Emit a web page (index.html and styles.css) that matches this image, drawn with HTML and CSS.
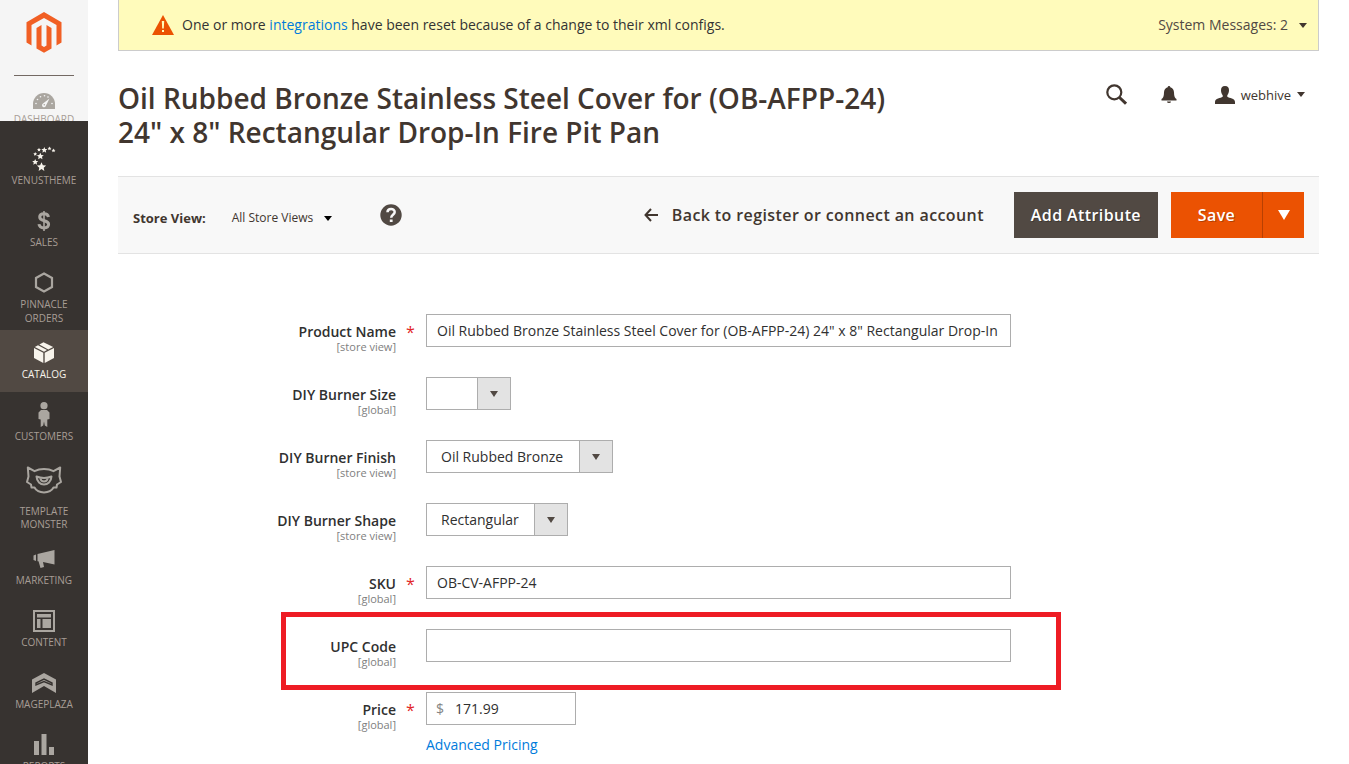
FILE: index.html
```html
<!DOCTYPE html>
<html lang="en">
<head>
<meta charset="utf-8">
<meta name="viewport" content="width=device-width, initial-scale=1">
<title>Oil Rubbed Bronze Stainless Steel Cover / Products / Catalog</title>
<link rel="stylesheet" href="styles.css">
</head>
<body>
<div class="layout">
  <aside class="sidebar">
    <div class="sidebar-top">
      <a class="logo" href="#" aria-label="Magento Admin">
        <svg width="36" height="42" viewBox="0 0 36 42"><path fill="#f15f24" d="M18 0 35.500 10.200V30.500L30.500 33.400V13.100L18 5.900 5.500 13.100V33.400L.5 30.500V10.200Z"/><path fill="#f15f24" d="M10.500 16 15.500 13.100V33.500L18 35 20.500 33.500V13.100L25.500 16V36.400L18 40.800 10.500 36.400Z"/></svg>
      </a>
      <a class="nav-item nav-cut" href="#">
        <span class="nav-icon"><svg width="22" height="17" viewBox="0 0 22 17"><path fill="#aaa6a0" d="M0 16V11a11 11 0 0 1 22 0v5Z"/><g fill="#f5f5f5"><circle cx="3" cy="10.500" r=".8"/><circle cx="4.500" cy="6.500" r=".8"/><circle cx="7.500" cy="3.800" r=".8"/><circle cx="11.500" cy="2.800" r=".8"/><circle cx="15" cy="4" r=".8"/><circle cx="19" cy="10.500" r=".8"/><path d="M16.500 5.500 13 12.500a2 2 0 1 1-3-2Z"/></g><circle cx="11.300" cy="11.800" r=".8" fill="#aaa6a0"/></svg></span>
        <span>Dashboard</span>
      </a>
    </div>
    <nav class="nav" aria-label="Main menu">
      <a class="nav-item" href="#">
        <span class="nav-icon"><svg width="24" height="26" viewBox="0 0 24 26"><defs><path id="star" d="M0-1 .3-.35 1-.3.48.18.62.9 0 .5-.62.9-.48.180-1-.3-.3-.35Z"/></defs><g fill="#f7f3eb"><use href="#star" transform="translate(21.500 4.500) scale(2)"/><use href="#star" transform="translate(17.500 2.500) scale(2)"/><use href="#star" transform="translate(12.300 4) scale(3)"/><use href="#star" transform="translate(7 3.700) scale(2)"/><use href="#star" transform="translate(8.300 10.200) scale(3.500)"/><use href="#star" transform="translate(3.200 8) scale(2)"/><use href="#star" transform="translate(3.200 16) scale(3)"/><use href="#star" transform="translate(9.500 20.800) scale(4.600)"/></g></svg></span>
        <span>Venustheme</span>
      </a>
      <a class="nav-item" href="#">
        <span class="nav-icon"><svg width="14" height="22" viewBox="0 0 14 22"><path fill="none" stroke="#aaa6a0" stroke-width="3" d="M11.500 7C11 4.700 9.500 3.800 7 3.800 4.300 3.800 2.700 5 2.700 7c0 5.200 8.900 2.300 8.900 7.300 0 2.300-1.800 3.600-4.600 3.600-3 0-4.700-1.300-5-3.800"/><path stroke="#aaa6a0" stroke-width="1.600" d="M7 1v20"/></svg></span>
        <span>Sales</span>
      </a>
      <a class="nav-item nav-tight" href="#">
        <span class="nav-icon"><svg width="20" height="21" viewBox="0 0 20 21"><path fill="none" stroke="#aaa6a0" stroke-width="2.200" d="M10 1.500 18 6V15L10 19.500 2 15V6Z"/></svg></span>
        <span>Pinnacle<br>Orders</span>
      </a>
      <a class="nav-item nav-active" href="#" aria-current="page">
        <span class="nav-icon"><svg width="20" height="21" viewBox="0 0 20 21"><g fill="#f7f3eb"><path d="M0 6 9.300 10.800V21L0 16Z"/><path d="M20 6 10.700 10.800V21L20 16Z"/><path d="M.8 4.900 4 3.200 13 8 10 9.700Z"/><path d="M5.300 2.500 9.500.3 19.200 4.900 14.300 7.400Z"/></g></svg></span>
        <span>Catalog</span>
      </a>
      <a class="nav-item" href="#">
        <span class="nav-icon"><svg width="12" height="25" viewBox="0 0 12 25"><g fill="#aaa6a0"><circle cx="6" cy="3.700" r="3.600"/><path d="M3 8h6l2.500 2.500V17L9.300 17.500V25L6.800 23.500 6 19.500 5.200 23.500 2.700 25V17.500L.5 17V10.500Z"/></g></svg></span>
        <span>Customers</span>
      </a>
      <a class="nav-item nav-tall" href="#">
        <span class="nav-icon"><svg width="36" height="28" viewBox="0 0 36 28"><g fill="none" stroke="#aaa6a0" stroke-width="2" stroke-linejoin="round"><path d="M1.800 1.500 8.500 5.200C14 2.300 22 2.300 27.500 5.200L34.200 1.500 33.500 10.500 35 16 31 18.500 30.500 21.500H27.500C24 28 12 28 8.500 21.500H5.500L5 18.500 1 16 2.500 10.500Z"/><path d="M10.500 10.500Q18 13.500 25.500 10.500C25 21 11 21 10.500 10.500Z"/><path d="M14.500 12.500a3.500 3 0 0 0 7 0"/></g></svg></span>
        <span>Template<br>Monster</span>
      </a>
      <a class="nav-item" href="#">
        <span class="nav-icon"><svg width="24" height="20" viewBox="0 0 24 20"><g fill="#aaa6a0"><path d="M1.500 6.500 4 5.500V12L1.500 11Z"/><path d="M5.500 5 22.500 1V15.500L11 13 12 18 8.500 19 6.500 12.300H5.500Z"/></g></svg></span>
        <span>Marketing</span>
      </a>
      <a class="nav-item" href="#">
        <span class="nav-icon"><svg width="22" height="22" viewBox="0 0 22 22"><path fill="none" stroke="#aaa6a0" stroke-width="2" d="M1 1h20v20H1z"/><path fill="#aaa6a0" d="M4 4h14v3.500H4zM4 9h3.500v9H4zM9.500 9H18v9H9.500z"/></svg></span>
        <span>Content</span>
      </a>
      <a class="nav-item" href="#">
        <span class="nav-icon"><svg width="24" height="20" viewBox="0 0 24 20"><path fill="#aaa6a0" d="M12 0 24 6.500V20L12 13 0 20V6.500Z"/><path fill="none" stroke="#373330" stroke-width="1.400" d="M4 12V10L12 6 20 10V12L12 8.500 4 12Z"/></svg></span>
        <span>Mageplaza</span>
      </a>
      <a class="nav-item" href="#">
        <span class="nav-icon"><svg width="20" height="21" viewBox="0 0 20 21"><path fill="#aaa6a0" d="M0 7h5v14H0zM7.500 0h5v21h-5zM15 13h5v8h-5z"/></svg></span>
        <span>Reports</span>
      </a>
    </nav>
  </aside>

  <main class="page">
    <section class="notice">
      <svg width="22" height="20" viewBox="0 0 22 20"><path fill="#eb5202" d="M11 0 22 20H0Z"/><path fill="#fffbbb" d="M9.800 6h2.400l-.4 7.500h-1.600zM10 15h2v2h-2z"/></svg>
      <p class="notice-text">One or more <a href="#">integrations</a> have been reset because of a change to their xml configs.</p>
      <button class="notice-toggle" type="button">System Messages: 2 <i class="caret"></i></button>
    </section>

    <header class="page-header">
      <h1>Oil Rubbed Bronze Stainless Steel Cover for (OB-AFPP-24) 24" x 8" Rectangular Drop-In Fire Pit Pan</h1>
      <div class="header-tools">
        <button class="tool" type="button" aria-label="Search"><svg width="21" height="21" viewBox="0 0 21 21"><g fill="none" stroke="#41362f"><circle cx="8.300" cy="8.300" r="7" stroke-width="2.200"/><path stroke-width="3" d="m13.500 13.500 6.500 6.200"/></g></svg></button>
        <button class="tool" type="button" aria-label="Notifications"><svg width="16" height="17" viewBox="0 0 16 17"><path fill="#41362f" d="M8 0a1.300 1.300 0 0 1 1.300 1.300C11.800 2 13 4 13 6.500c0 4 1 5.500 2.500 6.500v1.500H.5V13C2 12 3 10.500 3 6.500 3 4 4.200 2 6.700 1.300A1.300 1.300 0 0 1 8 0ZM6 15.500h4A2 1.500 0 0 1 6 15.500Z"/></svg></button>
        <button class="user" type="button"><svg width="20" height="18" viewBox="0 0 20 18"><path fill="#41362f" d="M10 0c3 0 4 1.800 4 4.300 0 2.200-.7 3.700-1.700 4.900v1.500c2 1.500 7.700 1.300 7.700 5.300v2H0v-2c0-4 5.700-3.800 7.700-5.300V9.200C6.700 8 6 6.500 6 4.300 6 1.800 7 0 10 0Z"/></svg><span>webhive</span><i class="caret"></i></button>
      </div>
    </header>

    <section class="actions">
      <div class="store">
        <span class="store-label">Store View:</span>
        <button class="store-switch" type="button">All Store Views <i class="caret caret-black"></i></button>
      </div>
      <a class="help" href="#" aria-label="Help"><svg width="22" height="22" viewBox="0 0 22 22"><circle cx="11" cy="11" r="10.700" fill="#514943"/><path fill="none" stroke="#f8f8f8" stroke-width="2.500" d="M7.500 8.300C7.500 4 14.700 4 14.700 8c0 2.800-3.500 2.800-3.500 5.700"/><path fill="#f8f8f8" d="M9.800 15.500h2.800V18H9.800z"/></svg></a>
      <div class="action-buttons">
        <button class="back" type="button"><svg width="14" height="14" viewBox="0 0 14 14"><path fill="none" stroke="#41362f" stroke-width="2" d="M7 1 1.500 7 7 13M1.500 7H14"/></svg>Back to register or connect an account</button>
        <button class="btn btn-dark" type="button">Add Attribute</button>
        <div class="split">
          <button class="btn btn-save" type="button">Save</button>
          <button class="btn btn-more" type="button" aria-label="More save options"><svg width="12" height="10" viewBox="0 0 12 10"><path fill="#fff" d="M0 0h12L6 10Z"/></svg></button>
        </div>
      </div>
    </section>

    <form class="form">
      <div class="field">
        <label class="field-label" for="name">Product Name<small>[store view]</small></label>
        <span class="required">*</span>
        <div class="control"><input class="text-input" id="name" type="text" value='Oil Rubbed Bronze Stainless Steel Cover for (OB-AFPP-24) 24" x 8" Rectangular Drop-In'></div>
      </div>
      <div class="field">
        <label class="field-label" for="size">DIY Burner Size<small>[global]</small></label>
        <div class="control"><span class="select-wrap"><select id="size"><option></option></select><i class="select-arrow"></i></span></div>
      </div>
      <div class="field">
        <label class="field-label" for="finish">DIY Burner Finish<small>[store view]</small></label>
        <div class="control"><span class="select-wrap"><select id="finish"><option>Oil Rubbed Bronze</option></select><i class="select-arrow"></i></span></div>
      </div>
      <div class="field">
        <label class="field-label" for="shape">DIY Burner Shape<small>[store view]</small></label>
        <div class="control"><span class="select-wrap"><select id="shape"><option>Rectangular</option></select><i class="select-arrow"></i></span></div>
      </div>
      <div class="field">
        <label class="field-label" for="sku">SKU<small>[global]</small></label>
        <span class="required">*</span>
        <div class="control"><input class="text-input" id="sku" type="text" value="OB-CV-AFPP-24"></div>
      </div>
      <div class="field field-marked">
        <label class="field-label" for="upc">UPC Code<small>[global]</small></label>
        <div class="control"><input class="text-input" id="upc" type="text"></div>
      </div>
      <div class="field">
        <label class="field-label" for="price">Price<small>[global]</small></label>
        <span class="required">*</span>
        <div class="control">
          <div class="price-box"><span class="currency">$</span><input id="price" type="text" value="171.99"></div>
          <a class="advanced" href="#">Advanced Pricing</a>
        </div>
      </div>
    </form>
  </main>
</div>
</body>
</html>
```

FILE: styles.css
```css
* { box-sizing: border-box; }

html { overflow: hidden; }

body {
  margin: 0;
  height: 100vh;
  overflow: hidden;
  background: #fff;
  color: #333;
  font: 14px/20px "Open Sans", "Noto Sans", sans-serif;
}

a { color: #007bdb; text-decoration: none; }

button, input, select { font: inherit; color: inherit; border-radius: 0; }

button {
  padding: 0;
  border: 0;
  background: none;
  cursor: pointer;
}

svg { display: block; flex: none; }

.layout { display: flex; min-height: 100%; }

/* Sidebar */
.sidebar {
  flex: none;
  width: 88px;
  background: #373330;
}

.sidebar-top { background: #f5f5f5; }

.logo {
  display: flex;
  justify-content: center;
  margin: 0 14px;
  padding: 12px 0 21px;
  border-bottom: 1px solid #736963;
}

.nav { padding-top: 15px; }

.nav-item {
  display: flex;
  flex-direction: column;
  align-items: center;
  min-height: 62px;
  padding-top: 8px;
  color: #a79d95;
  font-size: 10px;
  line-height: 14px;
  text-align: center;
  text-transform: uppercase;
}

.nav-icon {
  display: flex;
  flex: none;
  align-items: center;
  justify-content: center;
  height: 29px;
}

.nav-cut {
  height: 45px;
  min-height: 0;
  padding-top: 7px;
  overflow: hidden;
}

.nav-cut .nav-icon { padding-top: 8px; }

.nav-tight { height: 70px; }
.nav-active { background: #514943; color: #f7f3eb; }
.nav-tall { height: 82px; line-height: 13px; }
.nav-tall .nav-icon { height: 43px; padding-bottom: 8px; }

/* System notice */
.page { flex: 1; min-width: 0; padding: 0 30px; }

.notice {
  display: flex;
  align-items: center;
  height: 51px;
  padding: 0 11px 0 33px;
  border: 1px solid #ccc;
  border-top: 0;
  background: #fffbbb;
}

.notice-text { flex: 1; margin: 0 8px; }

.notice-toggle {
  display: flex;
  align-items: center;
  gap: 11px;
  color: #514943;
}

.caret {
  border: 4px solid transparent;
  border-top: 5px solid #41362f;
  border-bottom: 0;
}

.caret-black { border-top-color: #000; }

/* Title */
.page-header {
  display: flex;
  justify-content: space-between;
  gap: 30px;
  padding: 30px 14px 27px 0;
}

h1 {
  max-width: 790px;
  margin: 0;
  color: #41362f;
  font-size: 28px;
  font-weight: 600;
  line-height: 34px;
}

.header-tools {
  display: flex;
  align-items: center;
  height: 27px;
}

.tool { margin-right: 34px; }
.tool + .tool { margin-right: 38px; }

.user {
  display: flex;
  align-items: center;
  gap: 6px;
  color: #41362f;
  font-size: 13px;
}

/* Page actions */
.actions {
  display: flex;
  align-items: center;
  height: 78px;
  padding: 0 15px;
  border: solid #e3e3e3;
  border-width: 1px 0;
  background: #f8f8f8;
}

.store { display: flex; align-items: center; padding-top: 6px; }

.store-label { color: #41362f; font-weight: 700; font-size: 13px; }

.store-switch {
  display: flex;
  align-items: center;
  gap: 11px;
  margin: 0 48px 0 26px;
  color: #41362f;
  font-size: 12px;
}

.action-buttons { display: flex; margin-left: auto; }

.back {
  display: flex;
  align-items: center;
  gap: 14px;
  margin-right: 30px;
  color: #41362f;
  font-size: 16px;
  font-weight: 600;
  letter-spacing: .025em;
}

.btn {
  height: 46px;
  color: #fff;
  font-size: 16px;
  font-weight: 600;
  letter-spacing: .025em;
  text-shadow: 1px 1px 0 rgba(0, 0, 0, .25);
}

.btn-dark { margin-right: 13px; padding: 0 17px; background: #514943; }
.split { display: flex; background: #eb5202; }
.btn-save { width: 91px; }

.btn-more {
  display: flex;
  align-items: center;
  justify-content: center;
  width: 42px;
  border-left: 1px solid #b84002;
}

/* Product form */
.form { padding-top: 60px; }

.field {
  display: grid;
  grid-template-columns: 278fr 30px 585fr 308fr;
  min-height: 63px;
}

.field-label {
  grid-column: 1;
  padding-top: 8px;
  color: #303030;
  font-weight: 600;
  text-align: right;
}

.field-label small {
  display: block;
  color: #808080;
  font-size: 11px;
  font-weight: 400;
  line-height: 10px;
}

.required {
  grid-column: 2;
  padding: 8px 0 0 10px;
  color: #e22626;
  font-size: 16px;
}

.control { grid-column: 3; grid-row: 1; min-width: 0; }

.text-input {
  display: block;
  width: 100%;
  height: 33px;
  padding: 0 10px;
  border: 1px solid #adadad;
  background: #fff;
  color: #303030;
}

.select-wrap { display: inline-grid; vertical-align: top; }

select {
  grid-area: 1 / 1;
  min-width: 85px;
  height: 33px;
  padding: 0 48px 0 14px;
  border: 1px solid #adadad;
  background: #fff;
  color: #303030;
  appearance: none;
}

.select-arrow {
  grid-area: 1 / 1;
  justify-self: end;
  display: grid;
  place-items: center;
  width: 34px;
  border: 1px solid #adadad;
  background: #e3e3e3;
  pointer-events: none;
}

.select-arrow::before {
  content: "";
  border: 4px solid transparent;
  border-top: 6px solid #514943;
  border-bottom: 0;
}

.field-marked { position: relative; }

.field-marked::after {
  content: "";
  position: absolute;
  inset: -17px 258px 2px 163px;
  border: 5px solid #ee1c24;
  pointer-events: none;
}

.price-box {
  display: flex;
  align-items: center;
  width: 150px;
  height: 33px;
  padding: 0 9px;
  border: 1px solid #adadad;
}

.currency { color: #858585; }

.price-box input {
  width: 100%;
  min-width: 0;
  margin-left: 11px;
  padding: 0;
  border: 0;
  outline: 0;
  background: none;
  color: #303030;
}

.advanced { display: block; width: max-content; margin-top: 10px; }
```
